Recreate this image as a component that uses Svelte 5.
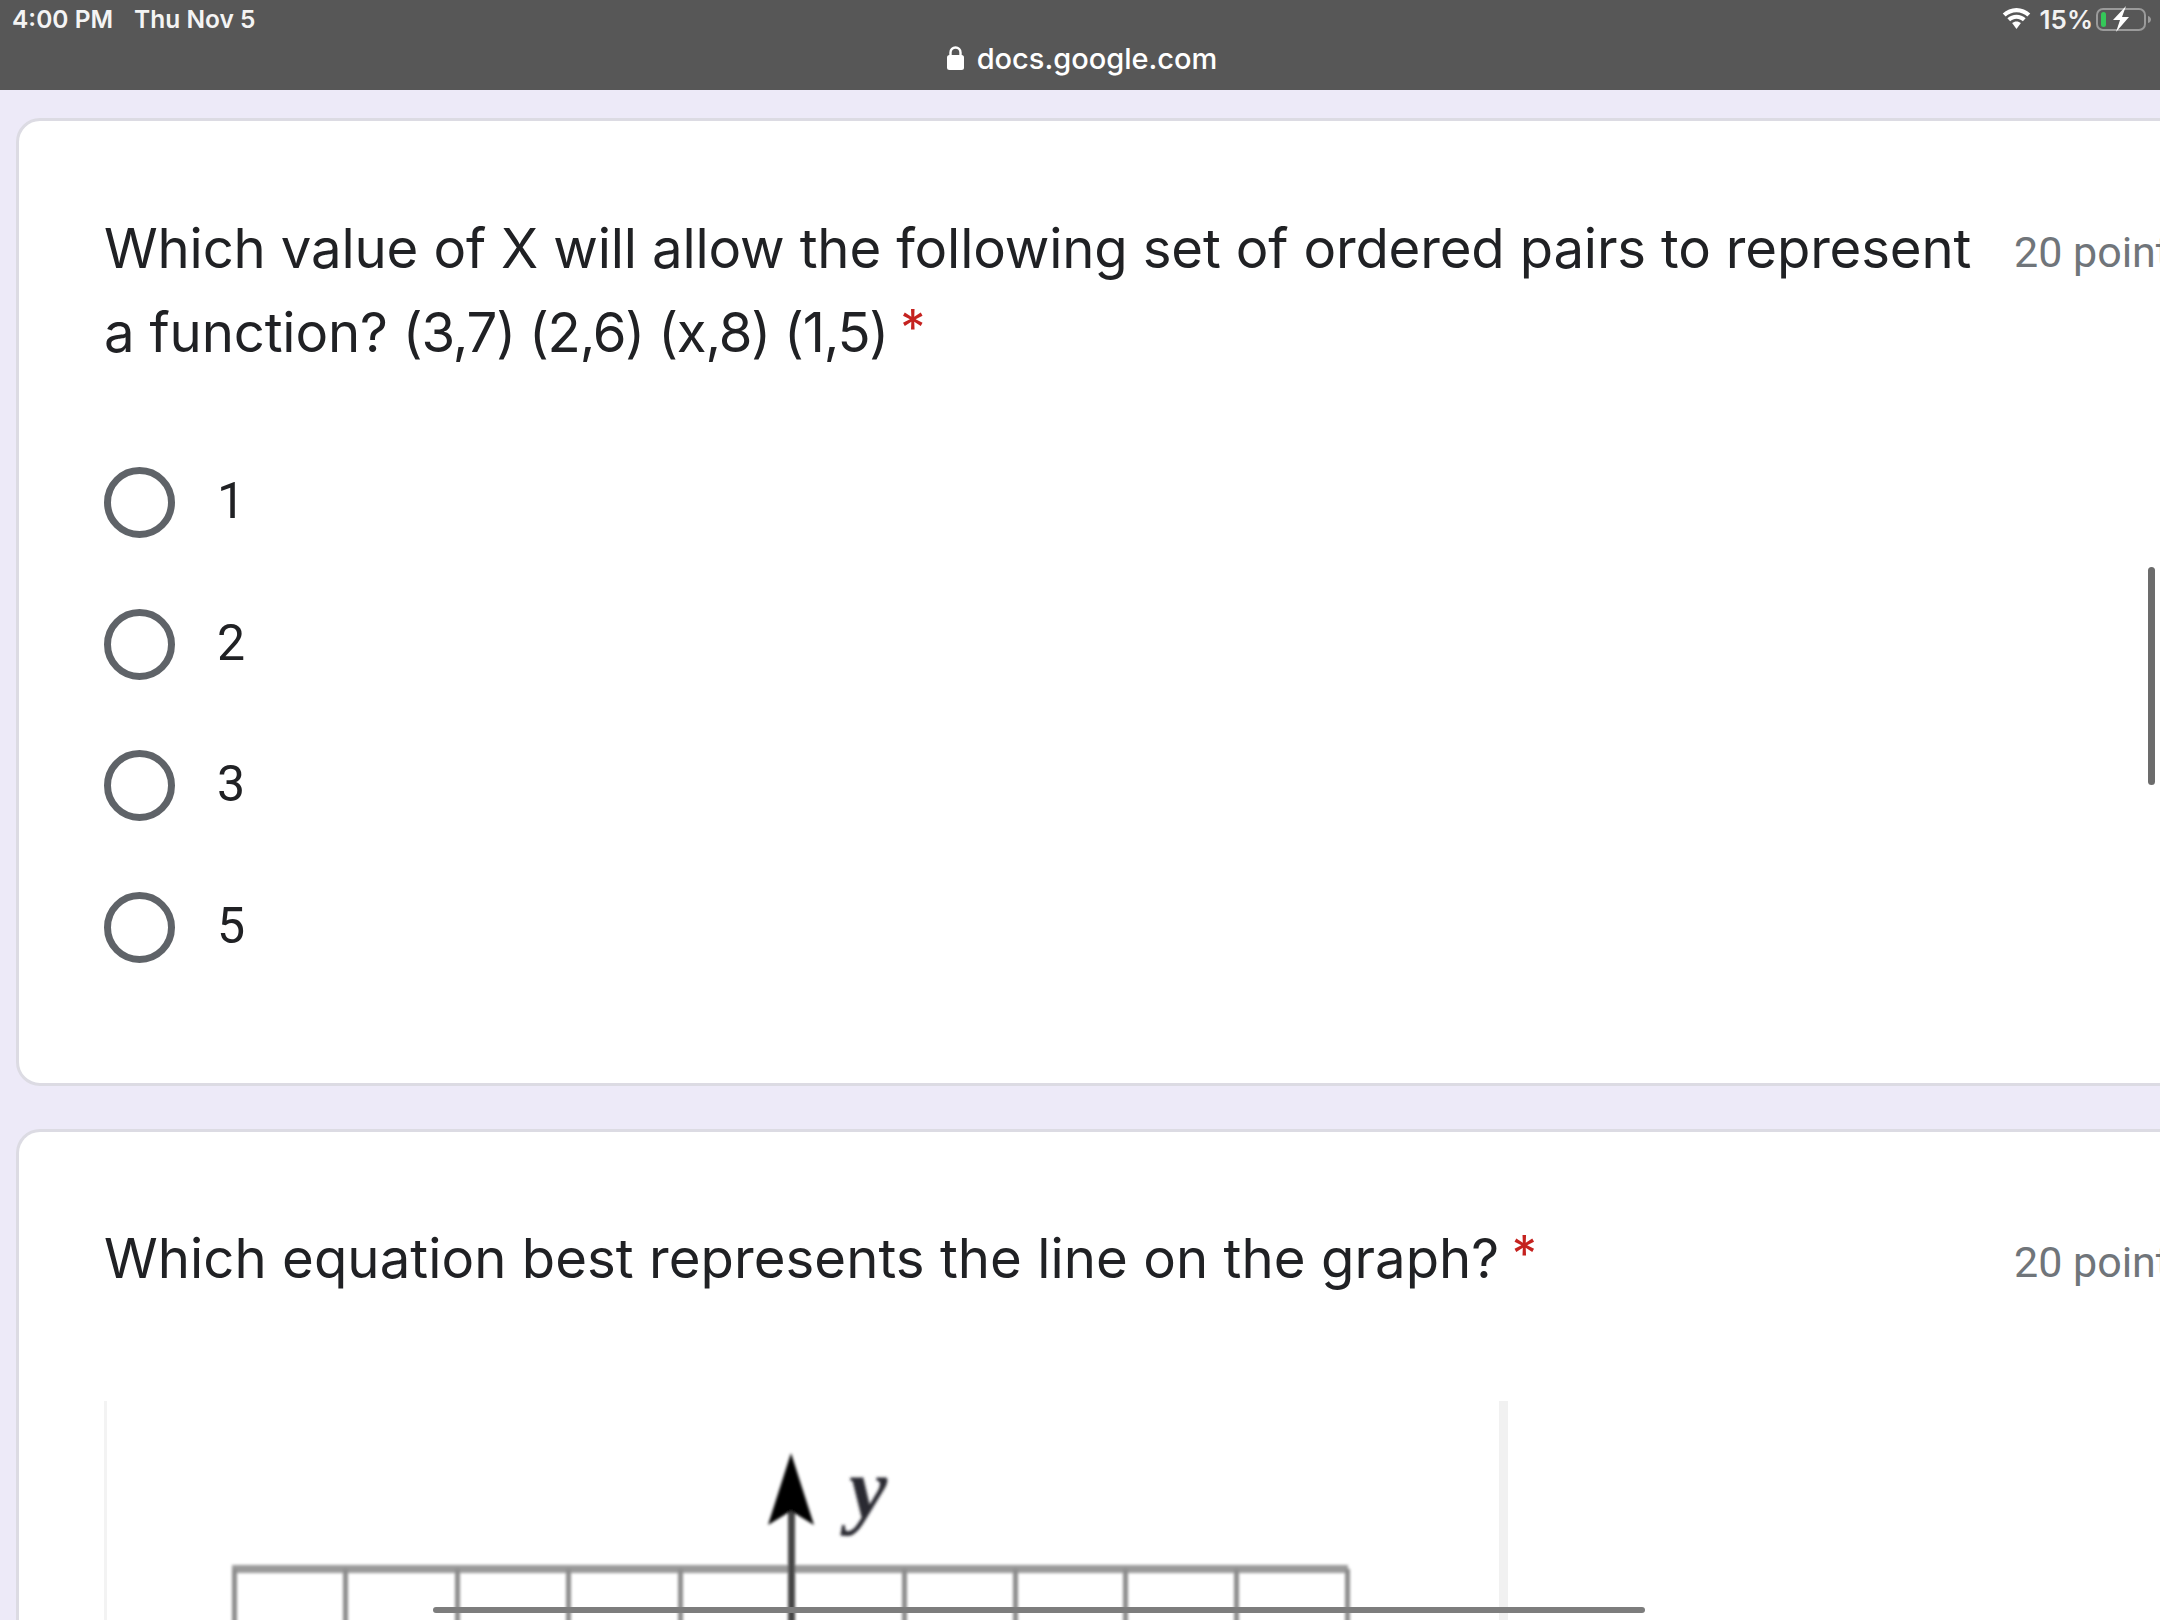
<script>
  const options1 = ['1', '2', '3', '5'];
  const gridX = [128, 239, 351, 462, 574, 798, 909, 1019, 1130, 1241];
</script>

<div class="root">
  <header class="bar">
    <div class="status">
      <div class="clock"><span>4:00 PM</span><span>Thu Nov 5</span></div>
      <div class="sys">
        <svg class="wifi" width="31" height="22" viewBox="0 0 28 20" aria-hidden="true">
          <path d="M14 3.800c3.800 0 7.300 1.500 9.900 3.900L26.500 5C23.200 1.900 18.800 0 14 0S4.800 1.900 1.500 5l2.600 2.700C6.700 5.300 10.200 3.800 14 3.800z" fill="#fff"/>
          <path d="M14 9.800c2.200 0 4.200.8 5.800 2.200l2.500-2.700C20 7.300 17.200 6.100 14 6.100S8 7.300 5.700 9.300L8.200 12c1.600-1.400 3.600-2.200 5.800-2.200z" fill="#fff"/>
          <path d="M14 12.200c-1.500 0-2.900.6-4 1.500L14 19l4-5.300c-1.100-.9-2.500-1.500-4-1.500z" fill="#fff"/>
        </svg>
        <span class="pct">15%</span>
        <svg class="batt" width="56" height="26" viewBox="0 0 56 26" aria-hidden="true">
          <rect x="1" y="3" width="48" height="21" rx="6" fill="none" stroke="#9a9a9a" stroke-width="2"/>
          <rect x="5" y="6" width="5" height="15" rx="2.500" fill="#35c759"/>
          <path d="M30 0 17 14h7l-4 12 13-15h-7z" fill="#fff"/>
          <path d="M52 10c2 .5 3 2 3 3.500s-1 3-3 3.500z" fill="#9a9a9a"/>
        </svg>
      </div>
    </div>
    <div class="url">
      <svg width="17" height="24" viewBox="0 0 17 24" aria-hidden="true">
        <path d="M3.500 10V6.500a5 5 0 0 1 10 0V10" fill="none" stroke="#fff" stroke-width="2.400"/>
        <rect x="0" y="9" width="17" height="15" rx="2.500" fill="#fff"/>
      </svg>
      <span>docs.google.com</span>
    </div>
  </header>

  <main class="page">
    <section class="card first">
      <div class="head">
        <h2>Which value of X will allow the following set of ordered pairs to represent a function? <span class="math">(3,7) (2,6) (x,8) (1,5)</span> <span class="req">*</span></h2>
        <span class="pts">20 points</span>
      </div>
      <ul class="opts">
        {#each options1 as o}
          <li><span class="radio"></span><span class="lbl">{o}</span></li>
        {/each}
      </ul>
    </section>

    <section class="card second">
      <div class="head">
        <h2 class="wide">Which equation best represents the line on the graph? <span class="req">*</span></h2>
        <span class="pts">20 points</span>
      </div>
      <svg class="graph" width="1410" height="227" viewBox="0 0 1410 227" aria-label="Graph">
        <defs>
          <filter id="soft" x="-5%" y="-5%" width="110%" height="110%"><feGaussianBlur stdDeviation="1.800"/></filter>
        </defs>
        <rect x="0" y="0" width="3" height="227" fill="#f3f3f3"/>
        <rect x="1395" y="0" width="9" height="227" fill="#f1f1f1"/>
        <g filter="url(#soft)">
          <rect x="128" y="164" width="1116" height="8" fill="#9a9a9a"/>
          {#each gridX as x}
            <rect x={x} y="168" width="5" height="62" fill="#8c8c8c"/>
          {/each}
          <rect x="684" y="100" width="7" height="130" fill="#444"/>
          <path d="M687 52 L710 124 L687 110 L664 124 Z" fill="#000"/>
          <text x="745" y="116" class="ylabel">y</text>
        </g>
      </svg>
    </section>
  </main>

  <div class="vscroll"></div>
  <div class="hscroll"></div>
</div>

<style>
  :global(body) { margin: 0; background: #edeaf8; }
  .root { position: relative; width: 2160px; height: 1620px; overflow: hidden; background: #edeaf8; font-family: Roboto, "Liberation Sans", sans-serif; }
  .bar { height: 90px; background: #575757; color: #fff; font-family: Inter, "Liberation Sans", sans-serif; display: flex; flex-direction: column; box-sizing: border-box; }
  .status { display: flex; justify-content: space-between; align-items: center; height: 38px; padding: 0 8px 0 12px; }
  .clock { display: flex; gap: 21px; font-size: 24.500px; font-weight: 600; color: #f4f4f4; }
  .sys { display: flex; align-items: center; gap: 8px; }
  .pct { font-size: 26px; font-weight: 600; color: #f2f2f2; }
  .batt { margin-left: -5px; }
  .url { flex: 1; display: flex; justify-content: center; align-items: center; gap: 13px; font-size: 29px; font-weight: 500; padding-bottom: 12px; padding-left: 4px; }
  .page { display: flex; flex-direction: column; gap: 43px; padding: 28px 0 0 16px; }
  .card { width: 2300px; box-sizing: border-box; background: #fff; border: 3px solid #dcdbe3; border-radius: 24px; padding: 85px; }
  .second { border-bottom: 0; border-radius: 24px 24px 0 0; padding-top: 84px; padding-bottom: 0; }
  .head { display: flex; align-items: flex-start; gap: 42px; }
  h2 { margin: 0; width: 1868px; flex: none; font-family: Inter, Roboto, sans-serif; font-size: 54.500px; font-weight: 400; line-height: 84px; color: #202124; letter-spacing: -0.16px; }
  h2.wide { letter-spacing: 0.05px; }
  .math { letter-spacing: -1.2px; }
  .req { color: #c5221f; font-size: 50px; margin-left: -3px; vertical-align: 6px; line-height: 1; }
  .pts { font-size: 43px; line-height: 92px; color: #70757a; white-space: nowrap; }
  .opts { list-style: none; margin: 58px 0 0; padding: 0; }
  .opts li { display: flex; align-items: center; height: 141.500px; }
  .radio { width: 71px; height: 71px; box-sizing: border-box; border: 7px solid #5f6368; border-radius: 50%; flex: none; }
  .lbl { margin-left: 42px; font-size: 50px; color: #202124; padding-bottom: 3px; }
  .graph { display: block; margin-top: 93px; }
  .ylabel { font-family: "Liberation Serif", serif; font-style: italic; font-weight: 700; font-size: 86px; fill: #2a2a33; }
  .vscroll { position: absolute; left: 2148px; top: 567px; width: 7px; height: 218px; border-radius: 4px; background: #6c6c6c; }
  .hscroll { position: absolute; left: 433px; top: 1607px; width: 1212px; height: 6px; border-radius: 3px; background: #7d7d7d; }
</style>
